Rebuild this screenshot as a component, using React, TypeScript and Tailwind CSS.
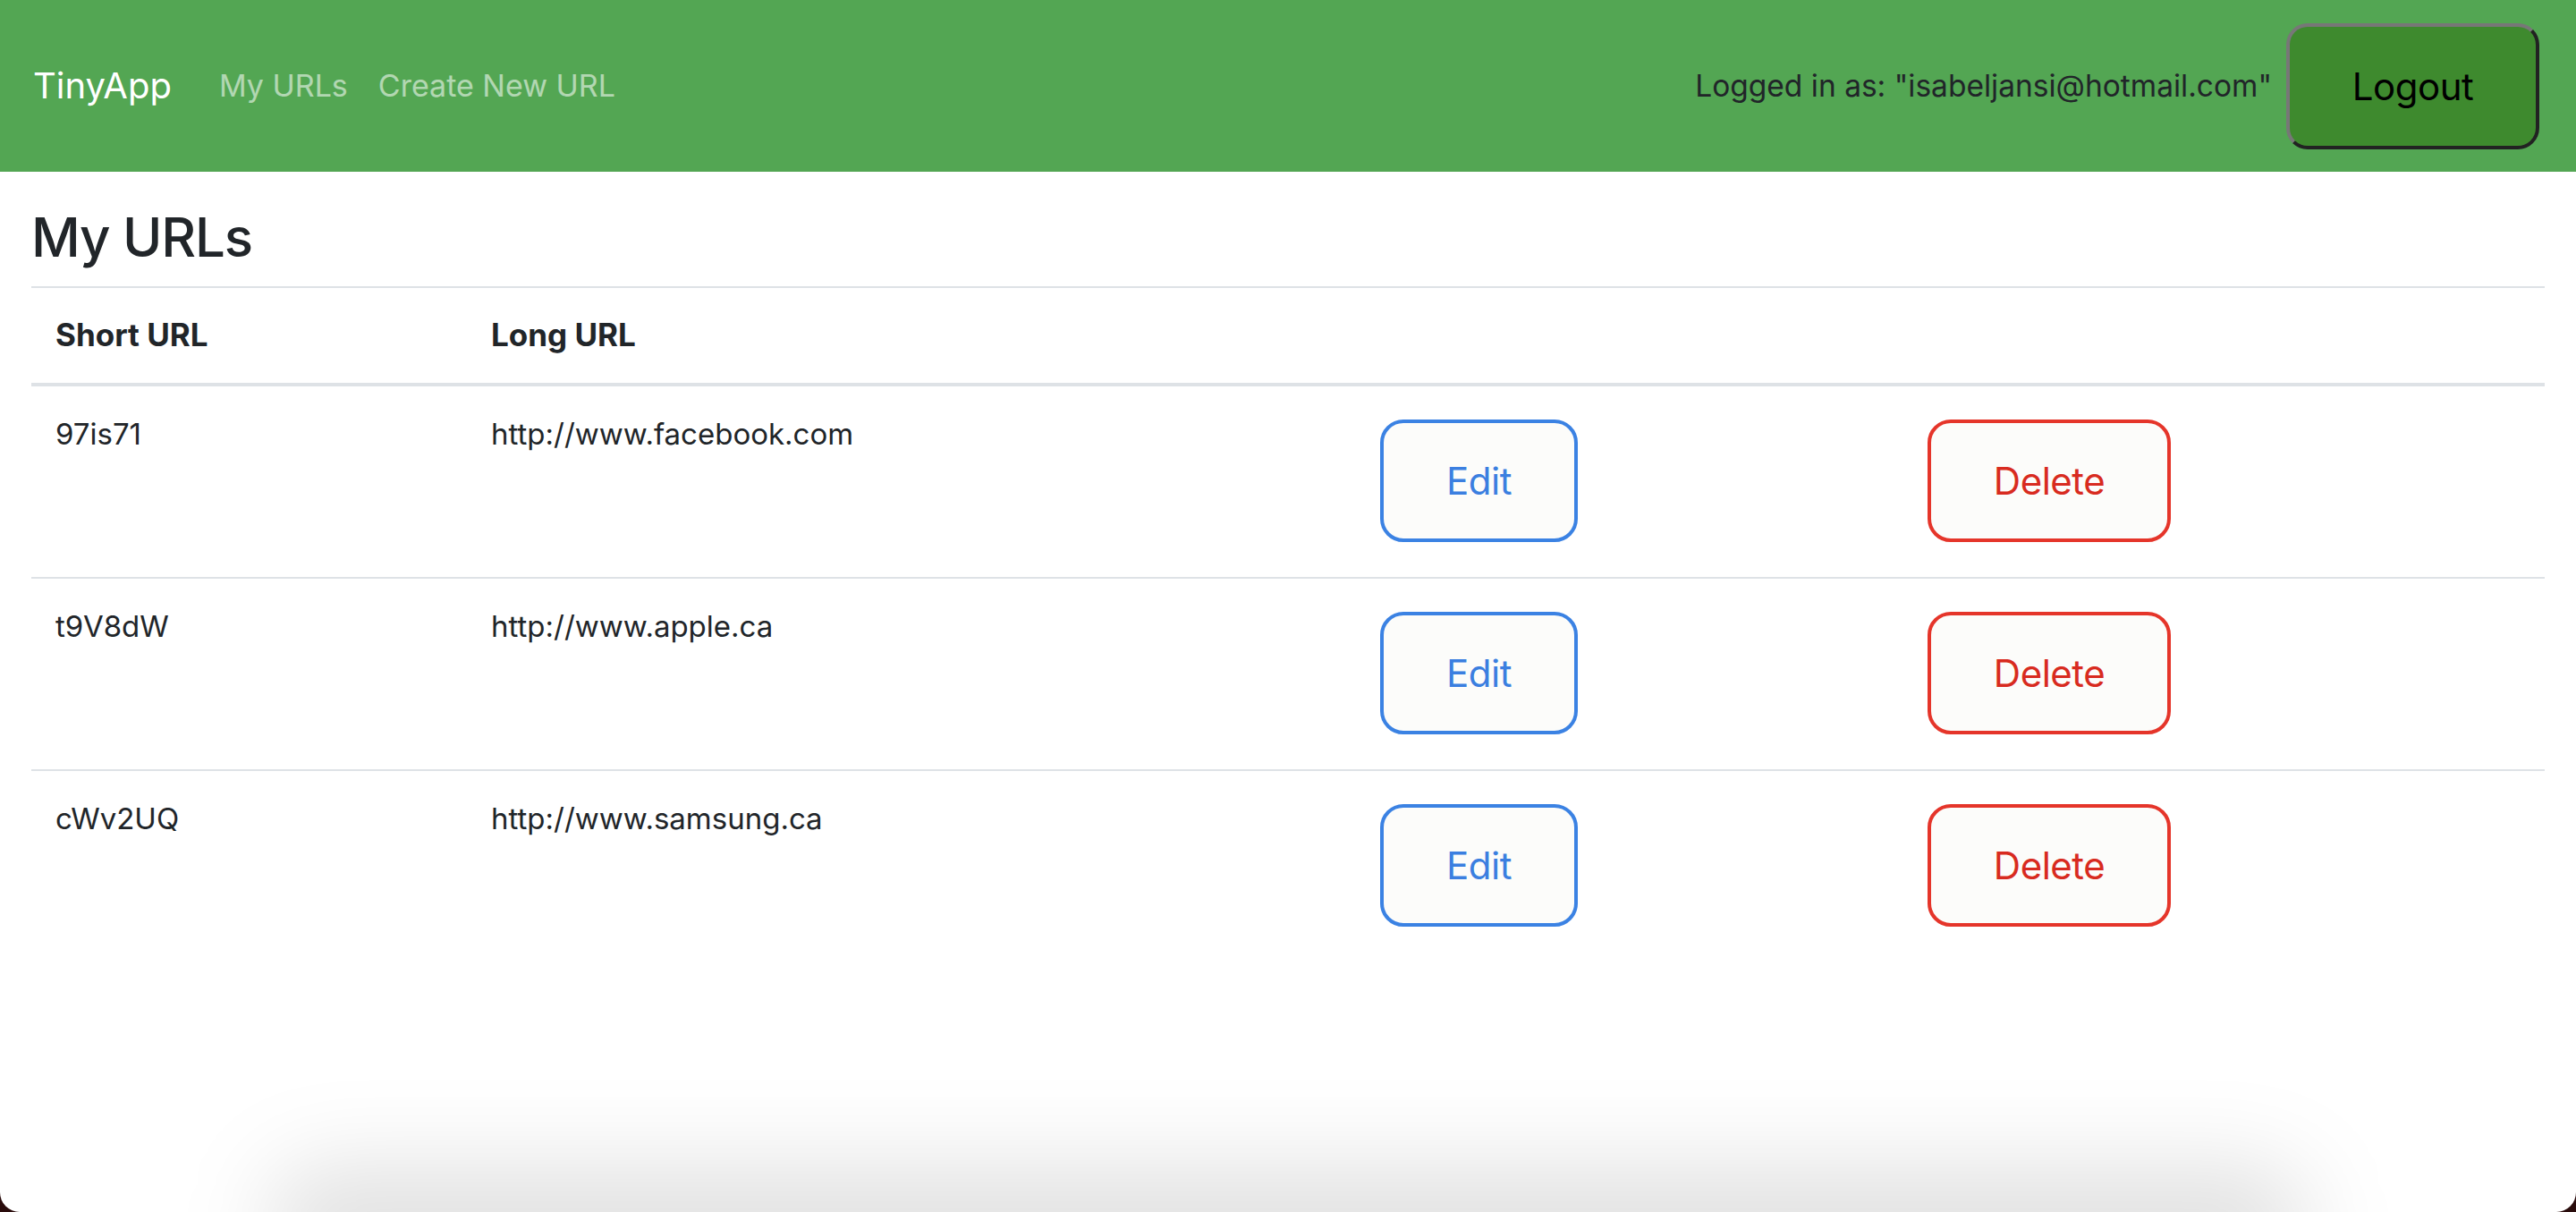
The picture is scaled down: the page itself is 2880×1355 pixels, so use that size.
const urls = [
  { short: "97is71", long: "http://www.facebook.com" },
  { short: "t9V8dW", long: "http://www.apple.ca" },
  { short: "cWv2UQ", long: "http://www.samsung.ca" },
];

const App = () => {
  return (
    <div className="min-h-screen bg-[#2a0c0c]">
      <div className="relative h-[1355px] overflow-hidden rounded-b-[22px] bg-white font-['Inter','Liberation_Sans',sans-serif] text-[#212529]">
        {/* Navbar */}
        <nav className="flex h-[192px] items-center bg-[#53a653] pl-[37px] pr-[41px]">
          <a className="text-[40px] leading-[60px] text-white">TinyApp</a>
          <div className="ml-[53px] flex items-center gap-[34px] text-[34px] leading-[48px] text-white/55">
            <a>My URLs</a>
            <a>Create New URL</a>
          </div>
          <div className="ml-auto flex items-center gap-[16px]">
            <span className="text-[33.5px] leading-[48px] text-[#212529]">
              Logged in as: "isabeljansi@hotmail.com"
            </span>
            <button className="h-[141px] w-[283px] rounded-[24px] border-[4px] border-t-[#777777] border-l-[#777777] border-b-[#222222] border-r-[#222222] bg-[#3e8a2e] text-[42px] text-black tracking-[-0.5px]">
              Logout
            </button>
          </div>
        </nav>

        {/* Content */}
        <main className="px-[35px]">
          <h2 className="mt-[35px] mb-[16px] text-[60px] leading-[77px] font-medium tracking-[-1.2px]">My URLs</h2>
          <table className="w-full border-collapse text-left text-[33px] leading-[48px]">
            <colgroup>
              <col className="w-[487px]" />
              <col className="w-[994px]" />
              <col className="w-[612px]" />
              <col />
            </colgroup>
            <thead>
              <tr className="border-t-[2px] border-b-[4px] border-[#dee2e6] text-[35px]">
                <th className="px-[27px] pt-[28px] pb-[30px] font-bold">Short URL</th>
                <th className="px-[27px] pt-[28px] pb-[30px] font-bold">Long URL</th>
                <th></th>
                <th></th>
              </tr>
            </thead>
            <tbody>
              {urls.map((u, i) => (
                <tr key={u.short} className={i < urls.length - 1 ? "border-b-[2px] border-[#dee2e6]" : ""}>
                  <td className="px-[27px] pt-[29px] align-top">{u.short}</td>
                  <td className="px-[27px] pt-[29px] align-top">{u.long}</td>
                  <td className="px-[27px] pt-[37px] pb-[39px] align-top">
                    <button className="h-[137px] w-[221px] rounded-[26px] border-[4px] border-[#3b82e3] bg-[#fcfcfa] text-[42px] text-[#3b7fe0] tracking-[-0.5px]">
                      Edit
                    </button>
                  </td>
                  <td className="px-[27px] pt-[37px] pb-[39px] align-top">
                    <button className="h-[137px] w-[272px] rounded-[26px] border-[4px] border-[#e5352a] bg-[#fcfcfa] text-[42px] text-[#d82b20] tracking-[-0.5px]">
                      Delete
                    </button>
                  </td>
                </tr>
              ))}
            </tbody>
          </table>
        </main>

        {/* soft shadow at the bottom edge */}
        <div className="pointer-events-none absolute bottom-[-80px] left-[300px] right-[300px] h-[130px] rounded-[60px] bg-black/12 blur-[50px]"></div>
      </div>
    </div>
  );
};

export default App;
